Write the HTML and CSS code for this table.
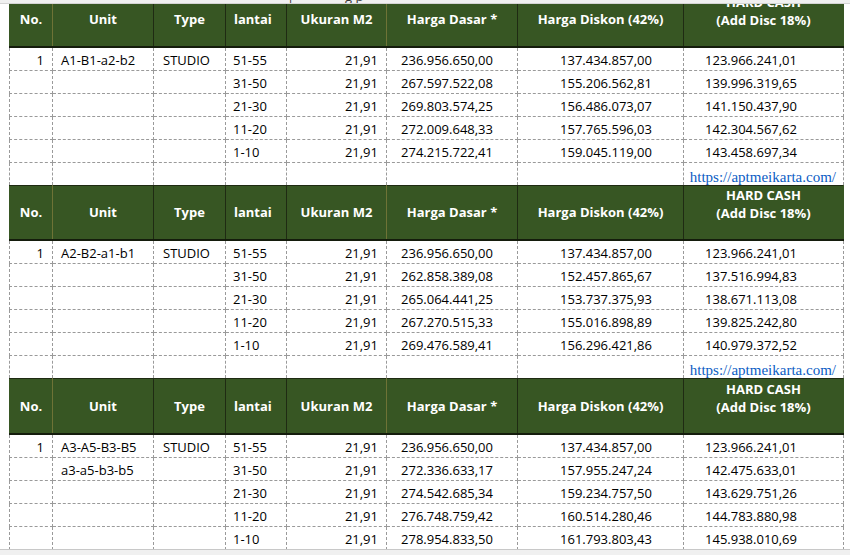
FILE: index.html
```html
<!DOCTYPE html>
<html lang="id">
<head>
<meta charset="utf-8">
<title>Daftar Harga</title>
<link rel="stylesheet" href="styles.css">
</head>
<body>
<div class="topbar"><span class="frag f1">|</span><span class="frag f2">g p</span></div>
<table class="sheet">
  <colgroup>
    <col class="w-no"><col class="w-unit"><col class="w-type"><col class="w-lantai"><col class="w-m2"><col class="w-hd"><col class="w-disk"><col class="w-hc">
  </colgroup>
  <tbody>
    <tr class="head">
      <th class="h-no">No.</th><th class="h-unit">Unit</th><th class="h-type">Type</th><th class="h-lantai">lantai</th><th class="h-m2">Ukuran M2</th><th class="h-hd">Harga Dasar *</th><th class="h-disk">Harga Diskon (42%)</th><th class="h-hc">HARD CASH<br>(Add Disc 18%)</th>
    </tr>
    <tr class="row"><td class="c-no">1</td><td class="c-unit">A1-B1-a2-b2</td><td class="c-type">STUDIO</td><td class="c-lantai">51-55</td><td class="c-m2">21,91</td><td class="c-hd">236.956.650,00</td><td class="c-disk">137.434.857,00</td><td class="c-hc">123.966.241,01</td></tr>
    <tr class="row"><td class="c-no"></td><td class="c-unit"></td><td class="c-type"></td><td class="c-lantai">31-50</td><td class="c-m2">21,91</td><td class="c-hd">267.597.522,08</td><td class="c-disk">155.206.562,81</td><td class="c-hc">139.996.319,65</td></tr>
    <tr class="row"><td class="c-no"></td><td class="c-unit"></td><td class="c-type"></td><td class="c-lantai">21-30</td><td class="c-m2">21,91</td><td class="c-hd">269.803.574,25</td><td class="c-disk">156.486.073,07</td><td class="c-hc">141.150.437,90</td></tr>
    <tr class="row"><td class="c-no"></td><td class="c-unit"></td><td class="c-type"></td><td class="c-lantai">11-20</td><td class="c-m2">21,91</td><td class="c-hd">272.009.648,33</td><td class="c-disk">157.765.596,03</td><td class="c-hc">142.304.567,62</td></tr>
    <tr class="row"><td class="c-no"></td><td class="c-unit"></td><td class="c-type"></td><td class="c-lantai">1-10</td><td class="c-m2">21,91</td><td class="c-hd">274.215.722,41</td><td class="c-disk">159.045.119,00</td><td class="c-hc">143.458.697,34</td></tr>
    <tr class="row link-row"><td></td><td></td><td></td><td></td><td></td><td></td><td></td><td class="c-link">https://aptmeikarta.com/</td></tr>

    <tr class="head">
      <th class="h-no">No.</th><th class="h-unit">Unit</th><th class="h-type">Type</th><th class="h-lantai">lantai</th><th class="h-m2">Ukuran M2</th><th class="h-hd">Harga Dasar *</th><th class="h-disk">Harga Diskon (42%)</th><th class="h-hc">HARD CASH<br>(Add Disc 18%)</th>
    </tr>
    <tr class="row"><td class="c-no">1</td><td class="c-unit">A2-B2-a1-b1</td><td class="c-type">STUDIO</td><td class="c-lantai">51-55</td><td class="c-m2">21,91</td><td class="c-hd">236.956.650,00</td><td class="c-disk">137.434.857,00</td><td class="c-hc">123.966.241,01</td></tr>
    <tr class="row"><td class="c-no"></td><td class="c-unit"></td><td class="c-type"></td><td class="c-lantai">31-50</td><td class="c-m2">21,91</td><td class="c-hd">262.858.389,08</td><td class="c-disk">152.457.865,67</td><td class="c-hc">137.516.994,83</td></tr>
    <tr class="row"><td class="c-no"></td><td class="c-unit"></td><td class="c-type"></td><td class="c-lantai">21-30</td><td class="c-m2">21,91</td><td class="c-hd">265.064.441,25</td><td class="c-disk">153.737.375,93</td><td class="c-hc">138.671.113,08</td></tr>
    <tr class="row"><td class="c-no"></td><td class="c-unit"></td><td class="c-type"></td><td class="c-lantai">11-20</td><td class="c-m2">21,91</td><td class="c-hd">267.270.515,33</td><td class="c-disk">155.016.898,89</td><td class="c-hc">139.825.242,80</td></tr>
    <tr class="row"><td class="c-no"></td><td class="c-unit"></td><td class="c-type"></td><td class="c-lantai">1-10</td><td class="c-m2">21,91</td><td class="c-hd">269.476.589,41</td><td class="c-disk">156.296.421,86</td><td class="c-hc">140.979.372,52</td></tr>
    <tr class="row link-row"><td></td><td></td><td></td><td></td><td></td><td></td><td></td><td class="c-link">https://aptmeikarta.com/</td></tr>

    <tr class="head">
      <th class="h-no">No.</th><th class="h-unit">Unit</th><th class="h-type">Type</th><th class="h-lantai">lantai</th><th class="h-m2">Ukuran M2</th><th class="h-hd">Harga Dasar *</th><th class="h-disk">Harga Diskon (42%)</th><th class="h-hc">HARD CASH<br>(Add Disc 18%)</th>
    </tr>
    <tr class="row"><td class="c-no">1</td><td class="c-unit">A3-A5-B3-B5</td><td class="c-type">STUDIO</td><td class="c-lantai">51-55</td><td class="c-m2">21,91</td><td class="c-hd">236.956.650,00</td><td class="c-disk">137.434.857,00</td><td class="c-hc">123.966.241,01</td></tr>
    <tr class="row"><td class="c-no"></td><td class="c-unit">a3-a5-b3-b5</td><td class="c-type"></td><td class="c-lantai">31-50</td><td class="c-m2">21,91</td><td class="c-hd">272.336.633,17</td><td class="c-disk">157.955.247,24</td><td class="c-hc">142.475.633,01</td></tr>
    <tr class="row"><td class="c-no"></td><td class="c-unit"></td><td class="c-type"></td><td class="c-lantai">21-30</td><td class="c-m2">21,91</td><td class="c-hd">274.542.685,34</td><td class="c-disk">159.234.757,50</td><td class="c-hc">143.629.751,26</td></tr>
    <tr class="row"><td class="c-no"></td><td class="c-unit"></td><td class="c-type"></td><td class="c-lantai">11-20</td><td class="c-m2">21,91</td><td class="c-hd">276.748.759,42</td><td class="c-disk">160.514.280,46</td><td class="c-hc">144.783.880,98</td></tr>
    <tr class="row"><td class="c-no"></td><td class="c-unit"></td><td class="c-type"></td><td class="c-lantai">1-10</td><td class="c-m2">21,91</td><td class="c-hd">278.954.833,50</td><td class="c-disk">161.793.803,43</td><td class="c-hc">145.938.010,69</td></tr>
  </tbody>
</table>
<div class="bottombar"></div>
</body>
</html>
```

FILE: styles.css
```css
html, body {
  margin: 0;
  padding: 0;
  background: #ffffff;
  overflow: hidden;
}

body {
  font-family: "Open Sans", "Liberation Sans", sans-serif;
  font-size: 13px;
  color: #000000;
}

.topbar {
  position: fixed;
  top: 0;
  left: 0;
  right: 0;
  height: 3px;
  background: #f0f0f0;
  border-bottom: 1px solid #d4d4d4;
  overflow: hidden;
  z-index: 2;
}

.frag {
  position: absolute;
  top: -10px;
  font-size: 13px;
  line-height: 13px;
  color: #333;
}
.f1 { left: 287px; }
.f2 { left: 345px; }

.bottombar {
  position: fixed;
  left: 0;
  right: 0;
  bottom: 0;
  height: 5px;
  background: #f0f0f0;
  border-top: 1px solid #c8c8c8;
  z-index: 2;
}

.sheet {
  margin: -9px 0 0 9px;
  border-collapse: collapse;
  table-layout: fixed;
  width: 834px;
}

.w-no { width: 43px; }
.w-unit { width: 101px; }
.w-type { width: 72px; }
.w-lantai { width: 61px; }
.w-m2 { width: 100px; }
.w-hd { width: 131px; }
.w-disk { width: 166px; }
.w-hc { width: 160px; }

.head th {
  height: 53.5px;
  padding: 0;
  background: #375623;
  color: #ffffff;
  font-weight: 700;
  font-size: 13px;
  line-height: 18px;
  text-align: center;
  vertical-align: middle;
  border-top: 1px solid #1e2a12;
  border-bottom: 2px solid #141c0c;
  border-right: 1px solid #1f2b13;
  white-space: nowrap;
}

.head th.h-no { border-right-color: #6e7336; border-left: 1px solid #375623; }
.head th.h-m2 { border-right-color: #6e7336; }
.head th.h-hc {
  height: 36.5px;
  border-right: 1px solid #375623;
  vertical-align: bottom;
  padding-bottom: 17px;
}
.head th.h-lantai { text-align: left; padding-left: 8px; }

.row td {
  height: 19px;
  padding: 0 0 3px 0;
  border: 1px dashed #9a9a9a;
  vertical-align: bottom;
  line-height: 14px;
  white-space: nowrap;
  overflow: visible;
}

.c-no { text-align: right; padding-right: 8px !important; }
.c-unit { padding-left: 8px !important; }
.c-type { padding-left: 9px !important; }
.c-lantai { padding-left: 7px !important; }
.c-m2 { text-align: right; padding-right: 8px !important; }
.c-hd { text-align: right; padding-right: 24px !important; }
.c-disk { text-align: right; padding-right: 31px !important; }
.c-hc { text-align: right; padding-right: 46px !important; }

.link-row td.c-link {
  font-family: "Liberation Serif", "Times New Roman", serif;
  font-size: 15px;
  color: #0b5cc4;
  text-align: right;
  padding-right: 7px;
  padding-bottom: 0;
  line-height: 15px;
}
```
